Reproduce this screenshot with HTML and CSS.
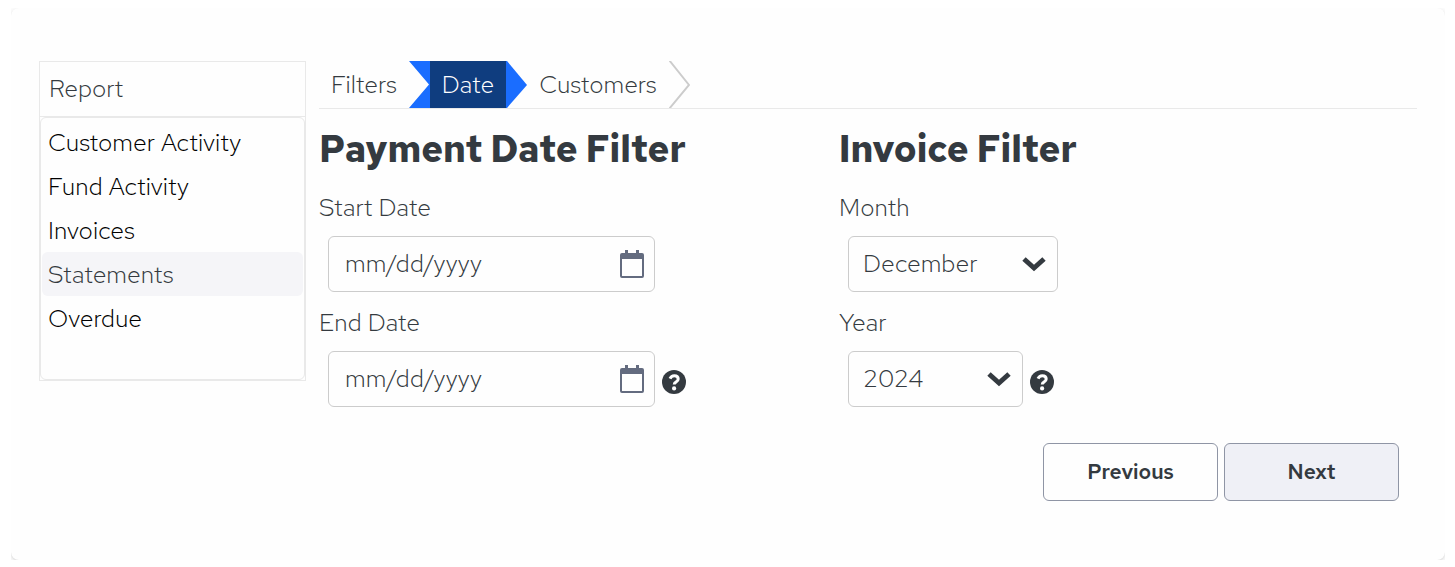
FILE: index.html
```html
<!DOCTYPE html>
<html lang="en">
<head>
    <meta charset="UTF-8">
    <meta name="viewport" content="width=device-width, initial-scale=1.0">
    <title>Reports</title>
    <link rel="stylesheet" href="styles.css">
</head>
<body>
    <div class="card">
        <div class="sidebar">
            <label class="sidebar-title" for="report">Report</label>
            <select class="report-list" id="report" size="5">
                <option>Customer Activity</option>
                <option>Fund Activity</option>
                <option>Invoices</option>
                <option selected>Statements</option>
                <option>Overdue</option>
            </select>
        </div>

        <form class="main">
            <nav class="steps">
                <button type="button" class="step">Filters</button>
                <svg class="step-arrow" viewBox="0 0 21 47"><path d="M0 0H21V47H0L20 23.5Z" fill="#1a6dff"/></svg>
                <button type="button" class="step active">Date</button>
                <svg class="step-arrow" viewBox="0 0 21 47"><path d="M0 0H1L21 24L1 47H0Z" fill="#1a6dff"/></svg>
                <button type="button" class="step">Customers</button>
                <svg class="step-arrow" viewBox="0 0 21 47"><path d="M0 -1L20 24L0 48" fill="none" stroke="#cccccc" stroke-width="2"/></svg>
            </nav>

            <div class="filters">
                <section>
                    <h2>Payment Date Filter</h2>
                    <div class="field">
                        <label for="startDate">Start Date</label>
                        <div class="field-row">
                            <div class="date-box">
                                <input type="date" id="startDate">
                                <svg class="calendar" viewBox="0 0 24 28"><path fill="#636b7f" fill-rule="evenodd" d="M5 0H8V3H16V0H19V3H22Q24 3 24 5V26Q24 28 22 28H2Q0 28 0 26V5Q0 3 2 3H5ZM2 9V26H22V9Z"/></svg>
                            </div>
                        </div>
                    </div>
                    <div class="field">
                        <label for="endDate">End Date</label>
                        <div class="field-row">
                            <div class="date-box">
                                <input type="date" id="endDate">
                                <svg class="calendar" viewBox="0 0 24 28"><path fill="#636b7f" fill-rule="evenodd" d="M5 0H8V3H16V0H19V3H22Q24 3 24 5V26Q24 28 22 28H2Q0 28 0 26V5Q0 3 2 3H5ZM2 9V26H22V9Z"/></svg>
                            </div>
                            <svg class="help" viewBox="0 0 24 24"><circle cx="12" cy="12" r="12" fill="#343a40"/><path d="M8 8.7Q9.3 5.7 12.3 5.7Q16.2 5.7 16.2 9Q16.2 10.8 14.2 11.8Q12.2 12.8 12.2 14.5" fill="none" stroke="#fff" stroke-width="3"/><circle cx="12.1" cy="18.4" r="2.1" fill="#fff"/></svg>
                        </div>
                    </div>
                </section>

                <section>
                    <h2>Invoice Filter</h2>
                    <div class="field">
                        <label for="month">Month</label>
                        <div class="field-row">
                            <div class="select-box month">
                                <select id="month">
                                    <option>December</option>
                                </select>
                                <svg class="chevron" viewBox="0 0 26 16"><path d="M3 3L13 12L23 3" fill="none" stroke="#343a40" stroke-width="5"/></svg>
                            </div>
                        </div>
                    </div>
                    <div class="field">
                        <label for="year">Year</label>
                        <div class="field-row">
                            <div class="select-box year">
                                <select id="year">
                                    <option>2024</option>
                                </select>
                                <svg class="chevron" viewBox="0 0 26 16"><path d="M3 3L13 12L23 3" fill="none" stroke="#343a40" stroke-width="5"/></svg>
                            </div>
                            <svg class="help" viewBox="0 0 24 24"><circle cx="12" cy="12" r="12" fill="#343a40"/><path d="M8 8.7Q9.3 5.7 12.3 5.7Q16.2 5.7 16.2 9Q16.2 10.8 14.2 11.8Q12.2 12.8 12.2 14.5" fill="none" stroke="#fff" stroke-width="3"/><circle cx="12.1" cy="18.4" r="2.1" fill="#fff"/></svg>
                        </div>
                    </div>
                </section>
            </div>

            <div class="actions">
                <button type="button" class="button">Previous</button>
                <button type="button" class="button next">Next</button>
            </div>
        </form>
    </div>
</body>
</html>
```

FILE: styles.css
```css
* {
    box-sizing: border-box;
}

body {
    margin: 8px 10px 7px 11px;
    background-color: #fff;
    color: #343a40;
    font-family: "Red Hat Text", Inter, sans-serif;
    font-size: 25px;
    font-weight: 300;
    line-height: 32px;
}

button, input, select {
    font: inherit;
    color: inherit;
}

.card {
    display: flex;
    align-items: flex-start;
    gap: 13px;
    padding: 53px 28px 59px;
    background-color: #fefefe;
    border-radius: 8px;
    box-shadow: 0 1px 2px rgba(0, 0, 0, 0.08), 0 2px 8px rgba(0, 0, 0, 0.12);
}

/* Report list */
.sidebar {
    display: flex;
    flex-direction: column;
    flex: 0 0 267px;
    border: 1px solid #e9e9e9;
}

.sidebar-title {
    padding: 11px 9px;
    border-bottom: 1px solid #e9e9e9;
}

.report-list {
    height: 263px;
    padding: 2px 1px;
    border: 1px solid #e9e9e9;
    border-radius: 6px;
    background-color: #fefefe;
    color: #000;
    outline: none;
    overflow: hidden;
}

.report-list option {
    min-height: 44px;
    padding: 6px 6px 5px;
    border-radius: 6px;
    font-weight: 300;
}

.report-list option:checked {
    background: #f5f5f8 linear-gradient(#f5f5f8, #f5f5f8);
    color: #343a40;
}

.main {
    flex: 1;
    min-width: 0;
}

/* Step tabs */
.steps {
    display: flex;
    height: 48px;
    border-bottom: 1px solid #e9e9e9;
}

.step {
    padding: 0 12px;
    border: none;
    background: none;
    cursor: pointer;
}

.step.active {
    background-color: #0f3d7f;
    color: #fff;
}

.step-arrow {
    width: 21px;
    height: 47px;
}

/* Filters */
.filters {
    display: grid;
    grid-template-columns: 9fr 10fr;
}

h2 {
    margin: 18px 0 21px;
    font-size: 37px;
    font-weight: 700;
    line-height: 44px;
}

.field {
    margin-bottom: 15px;
}

.field:last-child {
    margin-bottom: 0;
}

.field label {
    display: block;
    margin-bottom: 12px;
}

.field-row {
    display: flex;
    align-items: flex-end;
    gap: 7px;
    padding-left: 9px;
}

.date-box, .select-box {
    position: relative;
}

.date-box {
    width: 327px;
}

.month {
    width: 210px;
}

.year {
    width: 175px;
}

.field input, .field select {
    display: block;
    width: 100%;
    height: 56px;
    padding: 0 14px;
    border: 1px solid #cccccc;
    border-radius: 6px;
    background-color: #fefefe;
    appearance: none;
}

.field input {
    padding: 0 16px;
}

.field input::-webkit-datetime-edit-month-field,
.field input::-webkit-datetime-edit-day-field,
.field input::-webkit-datetime-edit-year-field {
    padding: 0;
}

.field input::-webkit-calendar-picker-indicator {
    opacity: 0;
}

.calendar {
    position: absolute;
    top: 14px;
    right: 11px;
    width: 24px;
    height: 28px;
    pointer-events: none;
}

.chevron {
    position: absolute;
    top: 20px;
    right: 11px;
    width: 26px;
    height: 16px;
    pointer-events: none;
}

.help {
    width: 24px;
    height: 24px;
    margin-bottom: 13px;
}

/* Buttons */
.actions {
    display: flex;
    justify-content: flex-end;
    gap: 6px;
    margin-top: 36px;
    padding-right: 18px;
}

.button {
    width: 175px;
    height: 58px;
    border: 1px solid #8f95a5;
    border-radius: 6px;
    background-color: #fefefe;
    font-size: 21px;
    font-weight: 600;
    cursor: pointer;
}

.button.next {
    background-color: #eff0f6;
}
```
